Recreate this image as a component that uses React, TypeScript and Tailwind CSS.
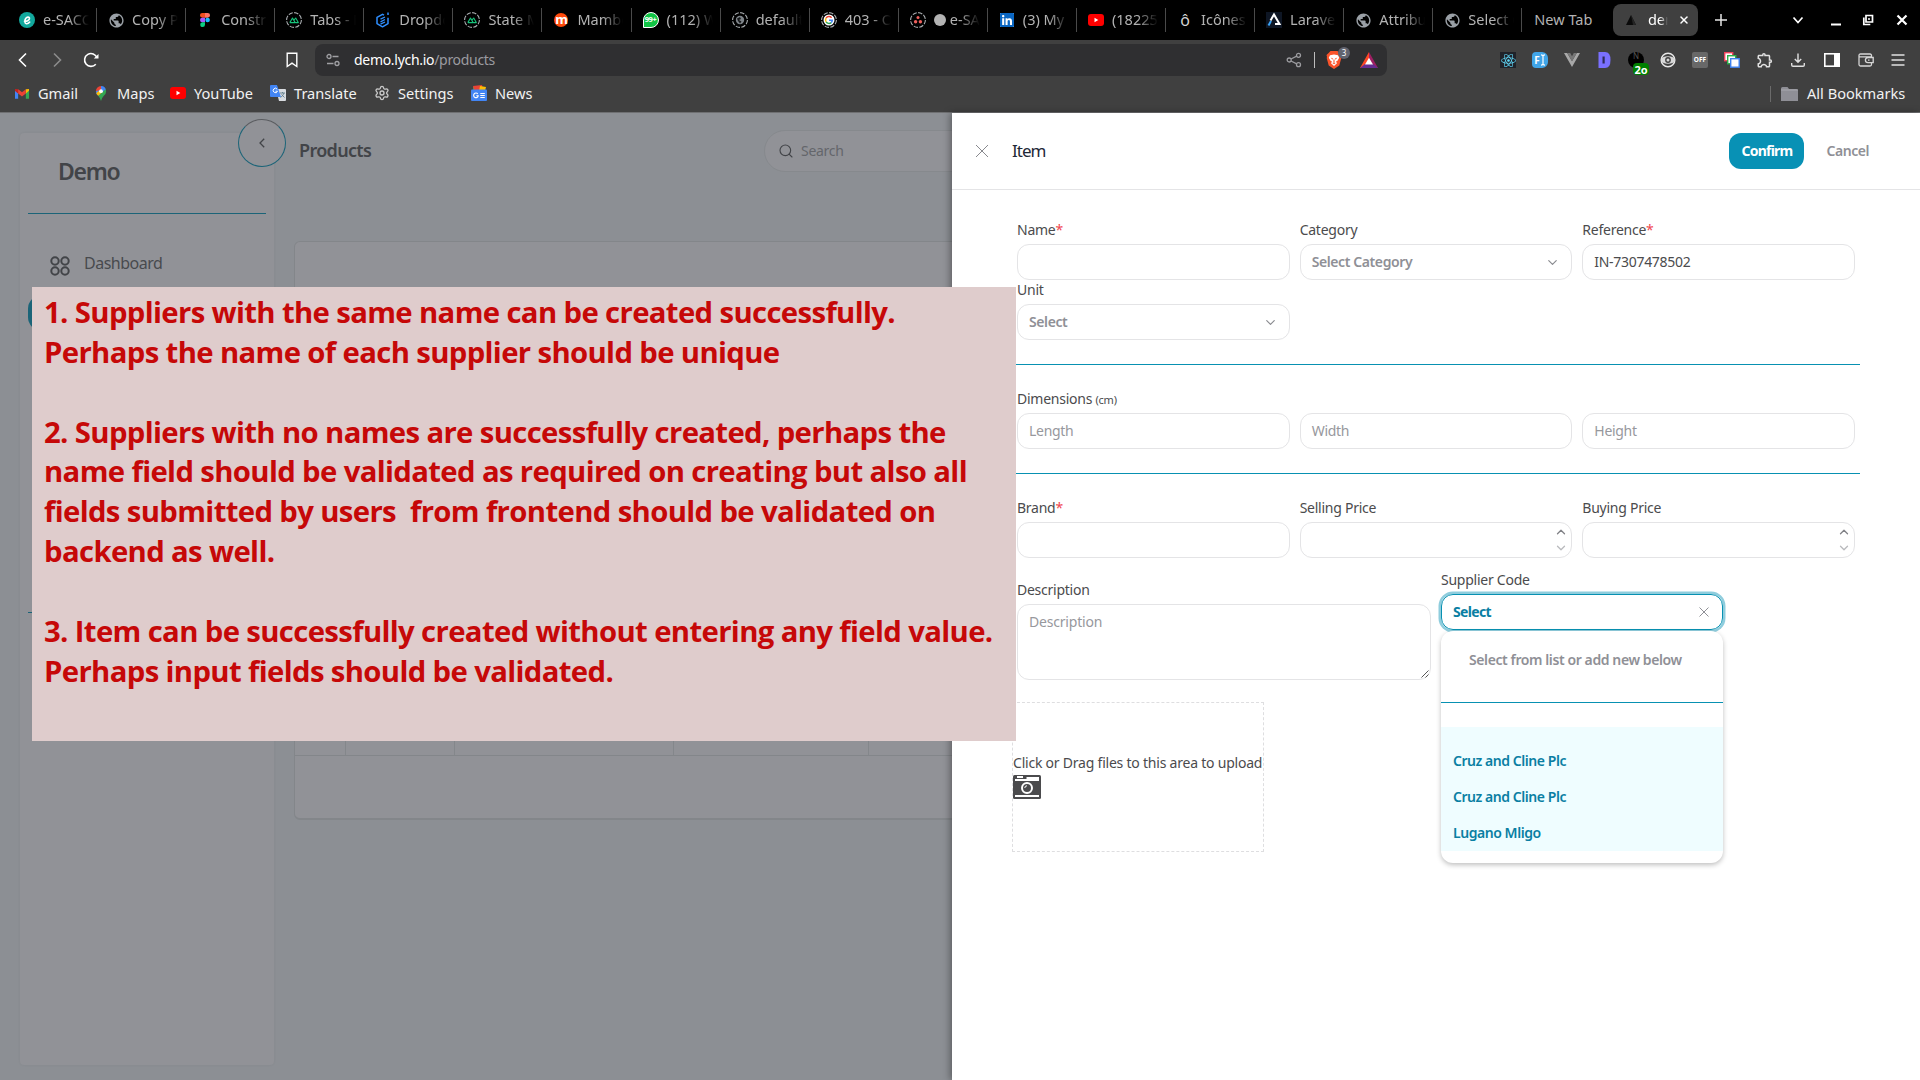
import type { ReactNode } from 'react';
import { ChevronDown, ChevronUp, Search, Settings, X } from 'lucide-react';
import { MdPublic, MdOutlineExtension } from 'react-icons/md';
import { FaReact, FaLinkedin } from 'react-icons/fa';

function Ring({ children }: { children: ReactNode }) {
  return (
    <svg viewBox="0 0 16 16" className="size-4">
      <circle cx="8" cy="8" r="7.4" fill="none" stroke="#a9adb0" strokeWidth="1.1" strokeDasharray="4.4 1.400" />
      {children}
    </svg>
  );
}

const nuxt = (
  <Ring>
    <path d="M3.800 10.600 6.500 6 9.200 10.600H3.900M8.200 7.800 9.700 6 12.300 10.600H9.600" fill="none" stroke="#17c37b" strokeWidth="1.100" strokeLinejoin="round" />
  </Ring>
);
const globe = <MdPublic className="size-[17px] shrink-0 text-[#9aa0a6]" />;
const youtube = (
  <svg viewBox="0 0 16 12" className="h-3 w-4">
    <rect width="16" height="12" rx="3" fill="#f00" />
    <path d="M6.500 3.800v4.400L10.300 6z" fill="#fff" />
  </svg>
);

const tabs: { icon: ReactNode; title: string }[] = [
  {
    icon: (
      <svg viewBox="0 0 16 16" className="size-4">
        <circle cx="8" cy="8" r="8" fill="#12a89d" />
        <path d="M5.5 9.2c2.6.2 5.2-1.2 5-3-.2-1.500-2.600-1.500-3.800.3-1.200 1.900-1.300 4.800.6 5.200 1.400.2 2.600-.6 3.400-1.600" fill="none" stroke="#fff" strokeWidth="1.6" strokeLinecap="round" />
      </svg>
    ),
    title: 'e-SACCOS',
  },
  { icon: globe, title: 'Copy Pro' },
  {
    icon: (
      <svg viewBox="0 0 16 16" className="size-4">
        <path d="M5.300 1H8v4.700H5.300a2.350 2.350 0 0 1 0-4.700z" fill="#f24e1e" />
        <path d="M8 1h2.700a2.350 2.350 0 0 1 0 4.700H8z" fill="#ff7262" />
        <path d="M5.300 5.700H8v4.600H5.300a2.300 2.300 0 0 1 0-4.600z" fill="#a259ff" />
        <circle cx="10.600" cy="8" r="2.300" fill="#1abcfe" />
        <path d="M5.300 10.300H8v2.400a2.400 2.400 0 1 1-2.700-2.400z" fill="#0acf83" />
      </svg>
    ),
    title: 'Construct',
  },
  { icon: nuxt, title: 'Tabs - Nu' },
  {
    icon: (
      <svg viewBox="0 0 16 16" className="size-4" fill="none" stroke="#2f8fff" strokeWidth="1.500" strokeLinejoin="round">
        <path d="M9 3.200 7.500 2.300 2 5.400v6.200l5.500 3.200 5.500-3.200V5.800M13 .500v2.500" />
        <path d="M5.500 7.200 10 5M5.500 9.800 10 7.500M5.500 12.200 10 10" strokeWidth="1.300" />
      </svg>
    ),
    title: 'Dropdow',
  },
  { icon: nuxt, title: 'State Ma' },
  {
    icon: (
      <span className="flex size-[14px] items-center justify-center rounded-full bg-[#ff4a0b] pb-0.5 text-[13px] font-bold leading-none text-white">m</span>
    ),
    title: 'Mambo',
  },
  {
    icon: (
      <span className="flex size-4 items-center justify-center rounded-full rounded-bl-none border border-white bg-[#11c445] text-[7.5px] font-bold leading-none tracking-tighter text-white">99+</span>
    ),
    title: '(112) Wh',
  },
  {
    icon: (
      <Ring>
        <circle cx="8" cy="8" r="4.200" fill="#7d8388" />
        <path d="M5 6.500 8 5l1 2-2 1 2.500 1.500L8 11.500 6 9z" fill="#16181a" />
      </Ring>
    ),
    title: 'default',
  },
  {
    icon: (
      <Ring>
        <circle cx="8" cy="8" r="5.500" fill="#fff" />
        <path d="M10.600 5.800A3.400 3.400 0 0 0 5.100 6.200" fill="none" stroke="#ea4335" strokeWidth="1.500" />
        <path d="M5.100 6.200a3.400 3.400 0 0 0 0 3.600" fill="none" stroke="#fbbc05" strokeWidth="1.500" />
        <path d="M5.100 9.800a3.400 3.400 0 0 0 5.100.8" fill="none" stroke="#34a853" strokeWidth="1.500" />
        <path d="M10.200 10.600A3.400 3.400 0 0 0 11.300 8.200H8" fill="none" stroke="#4285f4" strokeWidth="1.500" />
      </Ring>
    ),
    title: '403 - Ob',
  },
  {
    icon: (
      <Ring>
        <circle cx="8" cy="5.600" r="1.500" fill="#f0605c" />
        <circle cx="5.600" cy="9.800" r="1.700" fill="#f0605c" />
        <circle cx="10.400" cy="9.800" r="1.700" fill="#f0605c" />
      </Ring>
    ),
    title: '⬤ e-SAC',
  },
  {
    icon: (
      <span className="flex size-[14px] items-center justify-center bg-white">
        <FaLinkedin className="size-4 shrink-0 text-[#0a66c2]" />
      </span>
    ),
    title: '(3) My N',
  },
  { icon: youtube, title: '(18225)' },
  { icon: <span className="w-4 text-center text-[16px] leading-none text-[#d4d4d4]">ô</span>, title: 'Icônes' },
  {
    icon: (
      <svg viewBox="0 0 16 16" className="size-4">
        <rect width="16" height="16" fill="#0e1624" />
        <path d="M4.500 8.500 8 2.500 13.500 12H9" fill="none" stroke="#fff" strokeWidth="2" />
        <path d="M2.500 13.500 5 9" stroke="#3ba4f5" strokeWidth="2" />
      </svg>
    ),
    title: 'Laravel',
  },
  { icon: globe, title: 'Attribute' },
  { icon: globe, title: 'Select C' },
];

function TabStrip() {
  return (
    <div className="flex h-10 items-center bg-black pl-2 text-[14.5px] text-[#b3b3b3]">
      {tabs.map((tab, i) => (
        <div key={i} className="flex h-6 w-[89.080px] shrink-0 items-center gap-2 border-r border-[#4a4a4a] pl-[11px]">
          <span className="flex w-4 shrink-0 items-center justify-center">{tab.icon}</span>
          {tab.title.startsWith('⬤') ? (
            <span className="flex w-[46px] items-center gap-1 overflow-hidden whitespace-nowrap [mask-image:linear-gradient(to_right,black_55%,transparent)]">
              <span className="size-3 shrink-0 rounded-full bg-[#b3b3b3]" />
              {tab.title.slice(2)}
            </span>
          ) : (
            <span className="w-[46px] overflow-hidden whitespace-nowrap [mask-image:linear-gradient(to_right,black_55%,transparent)]">{tab.title}</span>
          )}
        </div>
      ))}
      <span className="w-[90.600px] whitespace-nowrap pl-[12px]">New Tab</span>
      <div className="flex h-8 w-[85px] shrink-0 items-center rounded-lg bg-[#404040] pl-3">
        <svg viewBox="0 0 12 12" className="size-3">
          <path d="M6 1 11 11H1z" fill="#0a0a0a" />
          <path d="M6 1 8 11h3z" fill="#242424" />
        </svg>
        <span className="ml-[11px] w-5 overflow-hidden whitespace-nowrap text-white [mask-image:linear-gradient(to_right,black_60%,transparent)]">demo</span>
        <X className="ml-[10px] size-3 text-white" strokeWidth={3} />
      </div>
      <svg viewBox="0 0 12 12" className="ml-[17px] size-3 shrink-0" stroke="#e6e6e6" strokeWidth="1.500">
        <path d="M6 0v12M0 6h12" />
      </svg>
      <div className="ml-auto flex items-center pr-[12px] text-white">
        <svg viewBox="0 0 12 12" className="mr-[26px] size-3" fill="none" stroke="#fff" strokeWidth="1.700">
          <path d="m1.500 3.500 4.500 5 4.500-5" />
        </svg>
        <svg viewBox="0 0 12 12" className="mr-5 size-3">
          <rect x="1" y="9.500" width="10" height="2" fill="#fff" />
        </svg>
        <svg viewBox="0 0 12 12" className="mr-[22px] size-3" fill="none" stroke="#fff" strokeWidth="1.700">
          <path d="M4 1.500h6.500V8H4zM1.800 3.500v7h6.500" />
          <path d="M6 5h2" />
        </svg>
        <svg viewBox="0 0 12 12" className="size-3" fill="none" stroke="#fff" strokeWidth="2.200">
          <path d="m1.500 1.500 9 9m0-9-9 9" />
        </svg>
      </div>
    </div>
  );
}

const extensions: ReactNode[] = [
  <span className="flex size-4 items-center justify-center bg-[#20232a]">
    <FaReact className="size-[15px] text-[#61dafb]" />
  </span>,
  <span className="flex size-4 items-center justify-center rounded-r-md rounded-l-sm bg-[#41a5e8] text-[10px] font-bold leading-none text-white">
    F
    <svg viewBox="0 0 6 12" className="h-3 w-[6px]" fill="none" stroke="#fff" strokeWidth="1.200">
      <path d="M1 .8q2 0 2 1.400 0-1.400 2-1.400M1 11.200q2 0 2-1.400 0 1.400 2 1.400M3 2v8" />
    </svg>
  </span>,
  <svg viewBox="0 0 16 14" className="h-[14px] w-4">
    <path d="M0 0h3.200L8 8.300 12.800 0H16L8 14z" fill="#a8a8a8" />
    <path d="M3.200 0h3L8 3.200 9.800 0h3L8 8.300z" fill="#777" />
  </svg>,
  <svg viewBox="0 0 16 16" className="size-4">
    <path d="M2.500 0H9q5.500 0 5.500 8T9 16H2.500z" fill="#7a70ff" />
    <path d="M6.500 4.500h2.200v7H6.500z" fill="#2d2a5a" />
  </svg>,
  <span className="relative flex size-4 items-center rounded-full bg-black pb-2 pl-[5px] text-[8px] leading-none text-[#555]">
    N
    <span className="absolute left-[5px] top-[11px] flex h-3 w-4 items-center justify-center rounded-sm bg-[#008000] text-[11px] font-bold leading-none text-white">2o</span>
  </span>,
  <svg viewBox="0 0 16 16" className="size-4">
    <circle cx="8" cy="8" r="6.800" fill="none" stroke="#e8e8e8" strokeWidth="1.500" />
    <ellipse cx="8" cy="8" rx="7" ry="3.800" fill="#d8d8d8" />
    <circle cx="8" cy="8" r="2.900" fill="#404040" />
    <circle cx="8" cy="8" r="1.500" fill="#d8d8d8" />
  </svg>,
  <span className="flex size-4 items-center justify-center rounded-xs bg-[#686868] text-[6.500px] font-bold leading-none text-white">OFF</span>,
  <svg viewBox="0 0 16 16" className="size-4">
    <rect x=".7" y=".7" width="8" height="8" fill="#fff" stroke="#f0435c" strokeWidth="1.400" />
    <rect x="3.700" y="3.700" width="8" height="8" fill="#fff" stroke="#2bb04a" strokeWidth="1.400" />
    <rect x="6.700" y="6.700" width="8.500" height="8.500" fill="#fff" stroke="#3f82f0" strokeWidth="1.400" />
  </svg>,
  <MdOutlineExtension className="size-[18px] shrink-0 text-[#e0e0e0]" />,
  <svg viewBox="0 0 16 16" className="size-4" fill="none" stroke="#e0e0e0" strokeWidth="1.400">
    <path d="M8 1.500v8.500M4.800 7 8 10.200 11.200 7M1.700 11v2q0 1.300 1.300 1.300h10q1.300 0 1.300-1.300v-2" />
  </svg>,
  <svg viewBox="0 0 16 16" className="ml-0.5 size-4">
    <rect x=".8" y="1.800" width="14.400" height="12.400" fill="none" stroke="#fff" strokeWidth="1.600" />
    <path d="M10 2h5v12h-5z" fill="#fff" />
  </svg>,
  <svg viewBox="0 0 16 16" className="ml-0.5 size-4" fill="none" stroke="#d6d6d6" strokeWidth="1.300">
    <path d="M13.500 5V3.500q0-1.500-1.500-1.500H2.500Q1 2 1 3.500v9Q1 14 2.500 14H12q1.500 0 1.500-1.500V11M1 4.800h12M15.200 5.500H10a2.600 2.600 0 0 0 0 5.200h5.200zM10 8.100h1.500" />
  </svg>,
  <svg viewBox="0 0 16 16" className="size-4" stroke="#e0e0e0" strokeWidth="1.300">
    <path d="M1.500 3h13M1.500 8h13M1.500 13h13" />
  </svg>,
];

function Toolbar() {
  return (
    <div className="flex h-10 items-center bg-[#404040]">
      <svg viewBox="0 0 16 16" className="ml-[15px] size-4 shrink-0" fill="none" stroke="#fff" strokeWidth="1.600">
        <path d="M11 1.500 4.500 8l6.500 6.500" />
      </svg>
      <svg viewBox="0 0 16 16" className="ml-[18px] size-4 shrink-0" fill="none" stroke="#8b8b8b" strokeWidth="1.600">
        <path d="M5 1.500 11.500 8 5 14.500" />
      </svg>
      <svg viewBox="0 0 16 16" className="ml-[18px] size-4 shrink-0" fill="none" stroke="#fff" strokeWidth="1.600">
        <path d="M12.800 12.200A6.400 6.400 0 1 1 14 5.800" />
        <path d="M10.800 6.600h4.700V2z" fill="#fff" stroke="none" />
      </svg>
      <svg viewBox="0 0 16 16" className="ml-[185px] size-4 shrink-0" fill="none" stroke="#fff" strokeWidth="1.400">
        <path d="M3.200 1.200h9.600v13.300L8 11.200l-4.800 3.300z" />
      </svg>
      <div className="ml-[15px] flex h-8 w-[1072px] items-center rounded-lg bg-[#2f2f31]">
        <svg viewBox="0 0 14 14" className="ml-[11px] size-[14px]" fill="none" stroke="#a0a0a4" strokeWidth="1.300">
          <circle cx="3" cy="3.500" r="2" />
          <circle cx="11" cy="10.500" r="2" />
          <path d="M6.500 3.500h6M1 10.500h6.500" />
        </svg>
        <span className="ml-[14px] pb-px text-[14px] tracking-[-0.300px] text-white">
          demo.lych.io<span className="text-[#9b9ba0]">/products</span>
        </span>
        <svg viewBox="0 0 16 16" className="ml-auto mr-3 size-4" fill="none" stroke="#9b9b9f" strokeWidth="1.300">
          <circle cx="3.200" cy="8" r="2" />
          <circle cx="12.500" cy="3.300" r="2" />
          <circle cx="12.500" cy="12.700" r="2" />
          <path d="m5 7 5.700-2.800M5 9l5.700 2.800" />
        </svg>
        <span className="h-4 w-px bg-[#bdbdbd]" />
        <span className="relative ml-[11px] flex h-[18px] w-4 items-center justify-center">
          <svg viewBox="0 0 16 18" className="h-[18px] w-4 shrink-0">
            <path d="M4.500 0h7l1.600 1.800L15.500 4l-.5 2 .3 1-2 7.500L8 18l-5.300-3.500L.7 7 1 6 .5 4l2.400-2.200z" fill="#fb542b" />
            <path d="M4 4.200 8 3.400l4 .8 1.200 2.600-1.700 3-1.500.6 1 1.800L8 15l-3-2.800 1-1.800-1.500-.6-1.700-3z" fill="#fff" />
            <path d="M4.600 6.500 7 7.500l-.5 1.200zM11.400 6.500 9 7.500l.5 1.200zM8 7.500l.8 3L8 11l-.8-.5zM6.300 12 8 11.300 9.700 12 8 13.300z" fill="#fb542b" />
          </svg>
          <span className="absolute -right-[8px] -top-[4px] flex size-3 items-center justify-center rounded-full bg-[#62646f] text-[8px] leading-none text-white">3</span>
        </span>
        <svg viewBox="0 0 18 16" className="ml-[18px] mr-[9px] h-4 w-[18px]">
          <path d="M9 0 0 16h9l0-6z" fill="#ff4724" />
          <path d="M9 0l9 16H9l0-6z" fill="#9e1f63" />
          <path d="M0 16h18l-5-4H5z" fill="#662d91" />
          <path d="M9 5.800 5 12.500h8z" fill="#fff" />
        </svg>
      </div>
      <div className="ml-auto flex items-center gap-4 pr-[14px]">
        {extensions.map((icon, i) => (
          <span key={i} className="flex min-w-4 items-center justify-center">{icon}</span>
        ))}
      </div>
    </div>
  );
}

const bookmarks: { icon: ReactNode; label: string; box: string }[] = [
  {
    icon: (
      <svg viewBox="0 0 16 12" className="h-[11px] w-[14px]">
        <path d="M0 2v10h3.600V5.500z" fill="#4285f4" />
        <path d="M16 2v10h-3.600V5.500z" fill="#34a853" />
        <path d="M12.400 1 16 .8v2L12.400 6z" fill="#fbbc04" />
        <path d="M0 .8 3.600 1v5L0 3z" fill="#c5221f" />
        <path d="M3.600 1 8 4.500 12.400 1v5L8 9.300 3.600 6z" fill="#ea4335" />
      </svg>
    ),
    label: 'Gmail',
    box: 'w-[79px]',
  },
  {
    icon: (
      <svg viewBox="0 0 12 16" className="h-[15px] w-3">
        <path d="M6 0a5.500 5.500 0 0 0-5.400 6L6 5z" fill="#ea4335" />
        <path d="M6 0a5.500 5.500 0 0 1 5.400 5L3 10.500Q.5 8 .5 5.500L6 4z" fill="#4285f4" />
        <path d="M11.500 5.500Q11.500 8 9 10.500 7 12.500 6 16 5 12.500 3 10.500L11 3.500z" fill="#34a853" />
        <path d="m1 7.500 3-2.500 4 1-5 4.500Q1.500 9 1 7.500z" fill="#fbbc04" />
        <circle cx="6" cy="5.500" r="2" fill="#fff" />
      </svg>
    ),
    label: 'Maps',
    box: 'w-[77px]',
  },
  { icon: youtube, label: 'YouTube', box: 'w-[100px]' },
  {
    icon: (
      <svg viewBox="0 0 16 16" className="size-4">
        <path d="M6 4h9q1 0 1 1v10q0 1-1 1H9z" fill="#d9dce1" />
        <path d="M1 0h6l4 12H1q-1 0-1-1V1q0-1 1-1z" fill="#4285f4" />
        <path d="M7.200 4.200A2.200 2.200 0 1 0 7.500 6.200H5.500" fill="none" stroke="#fff" />
        <path d="M10 8h5M12.500 7v1M14 8q-1 3-3.500 4.500M11.500 9.500l3 3" fill="none" stroke="#607d8b" strokeWidth=".9" />
      </svg>
    ),
    label: 'Translate',
    box: 'w-[104px]',
  },
  { icon: <Settings className="size-4 text-[#c9c9c9]" strokeWidth={2} />, label: 'Settings', box: 'w-[97px]' },
  {
    icon: (
      <svg viewBox="0 0 16 16" className="size-4">
        <path d="M2 2h12v5H2z" fill="#34a853" />
        <path d="m2 1 9-1 1 5H3z" fill="#ea4335" />
        <path d="m9 1 6 1-1 4H8z" fill="#fbbc04" />
        <rect y="4.500" width="16" height="11.500" rx="1" fill="#4285f4" />
        <path d="M6.800 9A2.300 2.300 0 1 0 7.200 10.800H5.300M9.300 8.500h4.500M9.300 10.500h4.500M9.300 12.500h4.500" fill="none" stroke="#fff" strokeWidth="1.100" />
      </svg>
    ),
    label: 'News',
    box: 'w-[80px]',
  },
];

function BookmarkBar() {
  return (
    <div className="flex h-[33px] items-center border-b border-[#6f7072] bg-[#404040] pb-[5px] pl-[14px] text-[14.600px] text-[#f2f2f2]">
      {bookmarks.map((b) => (
        <span key={b.label} className={`flex items-center gap-2 ${b.box}`}>
          <span className="flex w-4 shrink-0 justify-center">{b.icon}</span>
          {b.label}
        </span>
      ))}
      <span className="ml-auto h-4 w-px bg-[#6b6b6b]" />
      <svg viewBox="0 0 17 14" className="ml-[10px] h-[14px] w-[17px]">
        <path d="M0 1.500Q0 0 1.500 0h5l1.500 2h7.500Q17 2 17 3.500V14H0z" fill="#8f8f96" />
        <path d="M0 3h17" stroke="#a9a9af" />
      </svg>
      <span className="ml-[9px] w-[113px] whitespace-nowrap">All Bookmarks</span>
    </div>
  );
}

function Sidebar() {
  return (
    <aside className="ml-5 mt-5 h-[932px] w-[254px] shrink-0 rounded bg-[#919297] px-2 shadow-[0_0_3px_rgba(0,0,0,0.06)]">
      <h1 className="flex h-[81px] items-center border-b border-[#1b6478] pb-1 pl-[30px] text-[23px] font-semibold tracking-[-1.300px] text-[#424448]">Demo</h1>
      <div className="mt-[37px] flex h-6 items-center pl-[22px] text-[16px] tracking-[-0.500px] text-[#484a4e]">
        <svg viewBox="0 0 20 20" className="mt-[5px] size-5" fill="none" stroke="#424448" strokeWidth="2">
          <circle cx="5" cy="5" r="3.700" />
          <circle cx="15" cy="5" r="3.700" />
          <circle cx="5" cy="15" r="3.700" />
          <circle cx="15" cy="15" r="3.700" />
        </svg>
        <span className="ml-[14px]">Dashboard</span>
      </div>
      <div className="mt-5 h-9 rounded-[14px] bg-[#1b6478]" />
      <div className="mt-[281px] border-t border-[#1b6478]" />
    </aside>
  );
}

function ProductsPage() {
  return (
    <section className="ml-5 flex-1">
      <div className="flex h-[76px] items-center">
        <h2 className="ml-[5px] w-[465px] pb-px text-[18px] font-semibold tracking-[-0.680px] text-[#424448]">Products</h2>
        <div className="flex h-[42px] w-[260px] items-center rounded-full border border-[#86898d] bg-[#919297] pl-[13px]">
          <Search className="size-4 text-[#424448]" strokeWidth={1.700} />
          <span className="ml-[7px] pb-0.5 text-[14px] tracking-[-0.300px] text-[#64666b]">Search</span>
        </div>
      </div>
      <div className="mt-[52px] flex h-[579px] w-[760px] flex-col justify-end rounded-md border border-b-2 border-[#83868a] bg-[#919297]">
        <div className="flex h-[150px] border-b border-[#83868a]">
          <div className="w-[51px] border-r border-[#84878b]" />
          <div className="w-[109px] border-r border-[#84878b]" />
          <div className="w-[219px] border-r border-[#84878b]" />
          <div className="w-[195px] border-r border-[#84878b]" />
        </div>
        <div className="h-[62px]" />
      </div>
    </section>
  );
}

function Field({ label, required, children }: { label: string; required?: boolean; children: ReactNode }) {
  return (
    <div>
      <div className="mb-1 h-5 text-[14px] leading-5 tracking-[-0.250px] text-[#4b4b4d]">
        {label}
        {required && <span className="text-[#f0474f]">*</span>}
      </div>
      {children}
    </div>
  );
}

const box = 'flex h-9 items-center justify-between rounded-xl border border-[#e4e4e6] bg-white px-[11px] text-[14px] tracking-[-0.300px]';

function Input({ placeholder, value }: { placeholder?: string; value?: string }) {
  return (
    <div className={box}>
      {value ? <span className="pb-0.5 text-[#4b4b4d]">{value}</span> : <span className="pb-0.5 text-[#97989d]">{placeholder}</span>}
    </div>
  );
}

function SelectBox({ text }: { text: string }) {
  return (
    <div className={box}>
      <span className="pb-0.5 font-semibold tracking-[-0.400px] text-[#8f9096]">{text}</span>
      <ChevronDown className="size-[15px] text-[#8a8b90]" strokeWidth={1.900} />
    </div>
  );
}

function NumberInput() {
  return (
    <div className={box}>
      <span />
      <span className="-mr-2 flex flex-col gap-[2px]">
        <ChevronUp className="size-[14px] text-[#808186]" strokeWidth={2.200} />
        <ChevronDown className="size-[14px] text-[#b9babd]" strokeWidth={2.200} />
      </span>
    </div>
  );
}

function Supplier({ name }: { name: string }) {
  return <div className="flex h-9 items-center pb-0.5 pl-3 text-[14px] font-semibold tracking-[-0.450px] text-[#0a7fa3]">{name}</div>;
}

function Drawer() {
  return (
    <div className="absolute inset-y-0 right-0 w-[968px] bg-white shadow-[-2px_0_7px_rgba(0,0,0,0.35)]">
      <header className="flex h-[77px] items-center border-b border-[#e4e4e6]">
        <svg viewBox="0 0 12 12" className="ml-6 size-3" stroke="#88898e" strokeWidth="1">
          <path d="m0 0 12 12M12 0 0 12" />
        </svg>
        <span className="ml-6 text-[17px] tracking-[-1px] text-[#1f2937]">Item</span>
        <button className="ml-auto h-9 w-[75px] rounded-xl bg-[#0891b5] pb-0.5 text-[14px] font-bold tracking-[-0.750px] text-white">Confirm</button>
        <span className="ml-[22px] mr-[51px] pb-0.5 text-[14px] font-semibold tracking-[-0.450px] text-[#8f9096]">Cancel</span>
      </header>
      <div className="ml-[60px] mt-[30px] w-[848px]">
        <div className="grid grid-cols-3 gap-x-[10px] pl-[5px] pr-[5px]">
          <Field label="Name" required>
            <Input />
          </Field>
          <Field label="Category">
            <SelectBox text="Select Category" />
          </Field>
          <Field label="Reference" required>
            <Input value="IN-7307478502" />
          </Field>
          <Field label="Unit">
            <SelectBox text="Select" />
          </Field>
        </div>
        <hr className="mt-6 border-[#0891b2]" />
        <div className="mt-6 px-[5px]">
          <div className="mb-1 h-5 text-[14px] leading-5 tracking-[-0.250px] text-[#4b4b4d]">
            Dimensions <span className="text-[11px]">(cm)</span>
          </div>
          <div className="grid grid-cols-3 gap-x-[10px]">
            <Input placeholder="Length" />
            <Input placeholder="Width" />
            <Input placeholder="Height" />
          </div>
        </div>
        <hr className="mt-6 border-[#0891b2]" />
        <div className="mt-6 grid grid-cols-3 gap-x-[10px] px-[5px]">
          <Field label="Brand" required>
            <Input />
          </Field>
          <Field label="Selling Price">
            <NumberInput />
          </Field>
          <Field label="Buying Price">
            <NumberInput />
          </Field>
        </div>
        <div className="mt-3 flex gap-[10px] pl-[5px]">
          <div className="mt-[10px] w-[414px]">
            <Field label="Description">
              <div className="relative h-[76px] rounded-xl border border-[#e4e4e6] px-[11px] py-[7px] text-[14px] leading-5 tracking-[-0.200px] text-[#97989d]">
                Description
                <svg viewBox="0 0 8 8" className="absolute bottom-px right-px size-2" stroke="#555" strokeWidth="1">
                  <path d="M.5 7.500 7.500.5M4.500 7.500 7.500 4.500" />
                </svg>
              </div>
            </Field>
          </div>
          <div className="relative w-[282px]">
            <Field label="Supplier Code">
              <div className="flex h-9 items-center justify-between rounded-xl border border-[#0891b2] px-[11px] text-[14px] font-bold tracking-[-0.650px] text-[#0a7fa3] shadow-[0_0_0_2.500px_#8fcddd]">
                <span className="pb-0.5">Select</span>
                <svg viewBox="0 0 10 10" className="mr-0.5 size-[10px]" stroke="#8f9096" strokeWidth="1">
                  <path d="m.5.5 9 9m0-9-9 9" />
                </svg>
              </div>
            </Field>
            <div className="absolute inset-x-0 top-[61px] flex h-[232px] flex-col rounded-xl bg-white shadow-[0_2px_5px_rgba(0,0,0,0.25)]">
              <div className="flex h-[72px] items-start border-b border-[#0891b2] pl-7 pt-[19px] text-[14px] font-semibold leading-5 tracking-[-0.400px] text-[#8f9096]">
                Select from list or add new below
              </div>
              <div className="mt-6 h-[124px] bg-[#effdff] pt-4">
                <Supplier name="Cruz and Cline Plc" />
                <Supplier name="Cruz and Cline Plc" />
                <Supplier name="Lugano Mligo" />
              </div>
            </div>
          </div>
        </div>
        <div className="mt-[22px] flex h-[150px] w-[252px] flex-col justify-center border border-dashed border-[#dedee0] pb-[3px]">
          <span className="whitespace-nowrap text-[14px] leading-5 tracking-[-0.220px] text-[#4b4b4d]">Click or Drag files to this area to upload</span>
          <svg viewBox="0 0 28 24" className="mt-[2px] h-6 w-7">
            <rect width="28" height="24" rx="1.500" fill="#4b4b4d" />
            <path d="M4 1h6v2H4zM2 4h11.500V2H26v4H2zM2 20h24v2H2z" fill="#fff" />
            <circle cx="14" cy="13" r="5" fill="none" stroke="#fff" strokeWidth="2" />
            <path d="M11.800 13a2.200 2.200 0 0 1 2.200-2.200" fill="none" stroke="#fff" />
          </svg>
        </div>
      </div>
    </div>
  );
}

const notes = [
  '1. Suppliers with the same name can be created successfully.',
  'Perhaps the name of each supplier should be unique',
  '',
  '2. Suppliers with no names are successfully created, perhaps the',
  'name field should be validated as required on creating but also all',
  'fields submitted by users  from frontend should be validated on',
  'backend as well.',
  '',
  '3. Item can be successfully created without entering any field value.',
  'Perhaps input fields should be validated.',
];

export default function App() {
  return (
    <div className="flex h-[1080px] w-[1920px] flex-col overflow-hidden font-['Noto_Sans',sans-serif]">
      <TabStrip />
      <Toolbar />
      <BookmarkBar />
      <main className="relative flex flex-1 bg-[#8c8f94]">
        <Sidebar />
        <ProductsPage />
        <button className="absolute left-[238px] top-[6px] flex size-12 items-center justify-center rounded-full border border-[#1b6478] border-t-[#5a5c60] bg-[#919297]">
          <svg viewBox="0 0 6 10" className="h-[10px] w-[6px]" fill="none" stroke="#424448" strokeWidth="1.300">
            <path d="M5.200.7 1 5l4.200 4.300" />
          </svg>
        </button>
        <Drawer />
        <div className="absolute left-8 top-[174px] h-[454px] w-[984px] bg-[#dfcccc] pl-3 pt-[6px] font-['Open_Sans',sans-serif] text-[29.300px] font-bold leading-[39.850px] tracking-[-0.640px] text-[#c60808]">
          {notes.map((line, i) => (
            <p key={i} className="h-[39.850px] whitespace-pre">{line}</p>
          ))}
        </div>
      </main>
    </div>
  );
}
